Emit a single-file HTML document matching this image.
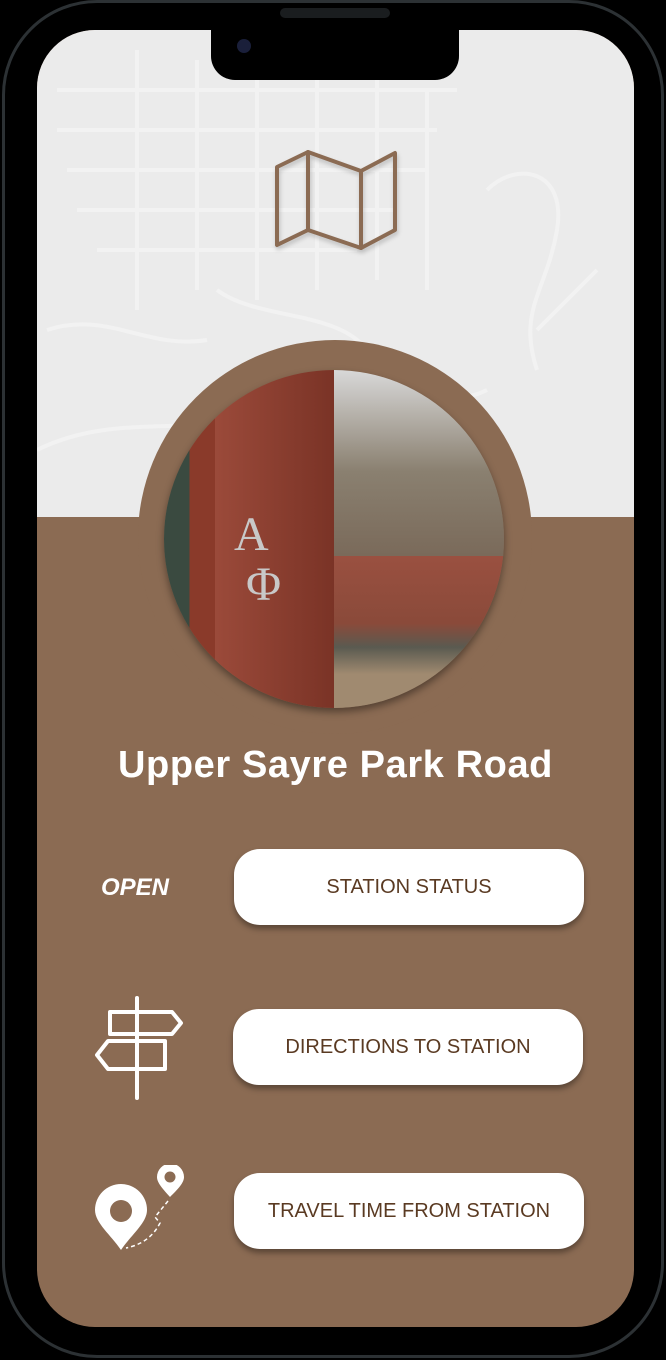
<!DOCTYPE html>
<html><head><style>
body{margin:0;width:666px;height:1360px;background:#000;position:relative;overflow:hidden;font-family:"Liberation Sans",sans-serif}
.frame{position:absolute;left:2px;top:0;width:662px;height:1358px;border-radius:95px;background:#000;border:3px solid #2c3134;box-sizing:border-box}
.screen{position:absolute;left:37px;top:30px;width:597px;height:1297px;border-radius:58px;overflow:hidden;background:#8b6b53}
.top{position:absolute;left:0;top:0;width:597px;height:487px;background:#ebebeb}
.notch{position:absolute;left:174px;top:0;width:248px;height:50px;background:#000;border-radius:0 0 24px 24px}
.btn{position:absolute;background:#fff;border-radius:26px;height:76px;color:#5a3a22;font-size:20px;display:flex;align-items:center;justify-content:center;box-shadow:0 4px 6px rgba(0,0,0,.35)}
</style></head><body>
<div class="frame"></div>
<div style="position:absolute;left:280px;top:8px;width:110px;height:10px;border-radius:5px;background:#1a1d1f"></div>
<div class="screen">
<div class="top">
<svg width="597" height="487" style="position:absolute;left:0;top:0" fill="none" stroke="#f5f5f5" stroke-width="4" opacity=".7">
<path d="M20 60h400M20 100h380M30 140h360M40 180h320M60 220h260M100 20v260M160 30v230M220 20v250M280 40v220M340 50v200M390 60v200"/>
<path d="M180 260c40 30 120 20 150 60s80 60 120 40M10 300c60-20 100 20 160 10M450 160c30-30 80-20 70 40s-40 80-20 140M500 300l60-60M0 420c80-40 160-10 250-40"/>
</svg>
<svg width="597" height="487" style="position:absolute;left:0;top:0;filter:drop-shadow(1px 3px 2px rgba(0,0,0,.2))" fill="none" stroke="#8b6b53" stroke-width="4" stroke-linejoin="round" stroke-linecap="round">
<path d="M240 137 L271 122 L324 141 L358 123 V200 L324 218 L271 200 L240 215 Z"/>
<path d="M271 122 V200 M324 141 V218"/>
</svg>
</div>
<div class="notch"></div>
<div style="position:absolute;left:200px;top:9px;width:14px;height:14px;border-radius:50%;background:#1a1f3a"></div>
<div style="position:absolute;left:101px;top:310px;width:394px;height:394px;border-radius:50%;background:#8b6b53"></div>
<div style="position:absolute;left:127px;top:340px;width:340px;height:338px;border-radius:50%;overflow:hidden;box-shadow:0 4px 8px rgba(0,0,0,.4)">
<div style="position:absolute;left:0;top:0;width:170px;height:338px;background:linear-gradient(90deg,#3a4a40 0 15%,#8a3a2a 15% 30%,#9b4a3a 30%,#7a3326)"></div>
<div style="position:absolute;left:170px;top:0;width:170px;height:338px;background:linear-gradient(180deg,#d8d8d8 0,#8a8070 30%,#7a6a5a 55%,#9a5040 55%,#8a4a3a 75%,#5a5a50 82%,#a08a70 90%)"></div>
<div style="position:absolute;left:70px;top:140px;color:#c8c8c8;font-family:'Liberation Serif',serif;font-size:48px;line-height:50px">Α<br>&nbsp;Φ</div>
</div>
<div style="position:absolute;left:0;top:714px;width:597px;text-align:center;color:#fff;font-weight:bold;font-size:38px;letter-spacing:0.6px">Upper Sayre Park Road</div>
<div style="position:absolute;left:64px;top:844px;color:#fff;font-weight:bold;font-style:italic;font-size:24px">OPEN</div>
<div class="btn" style="left:197px;top:819px;width:350px">STATION STATUS</div>
<div class="btn" style="left:196px;top:979px;width:350px">DIRECTIONS TO STATION</div>
<div class="btn" style="left:197px;top:1143px;width:350px">TRAVEL TIME FROM STATION</div>
<svg width="100" height="110" style="position:absolute;left:53px;top:966px" fill="none" stroke="#fff" stroke-width="4" stroke-linejoin="round" stroke-linecap="round">
<path d="M47 2V102"/>
<path d="M20 16H82L91 27L82 38H20Z"/>
<path d="M18 45H75V73H18L7 59Z"/>
</svg>
<svg width="100" height="95" style="position:absolute;left:58px;top:1135px">
<path d="M26 85C16 70 0 58 0 45a26 26 0 0 1 52 0c0 13-16 25-26 40z" fill="#fff"/>
<circle cx="26" cy="46" r="11" fill="#8b6b53"/>
<path d="M75 32C68 24 62 18 62 12a13 13 0 0 1 27 0c0 6-6 12-14 20z" fill="#fff"/>
<circle cx="75" cy="12" r="5.5" fill="#8b6b53"/>
<path d="M73 36L60 52L65 58C58 72 46 80 31 83" fill="none" stroke="#fff" stroke-width="1.5" stroke-dasharray="4 3"/>
</svg>
</div>
</body></html>
